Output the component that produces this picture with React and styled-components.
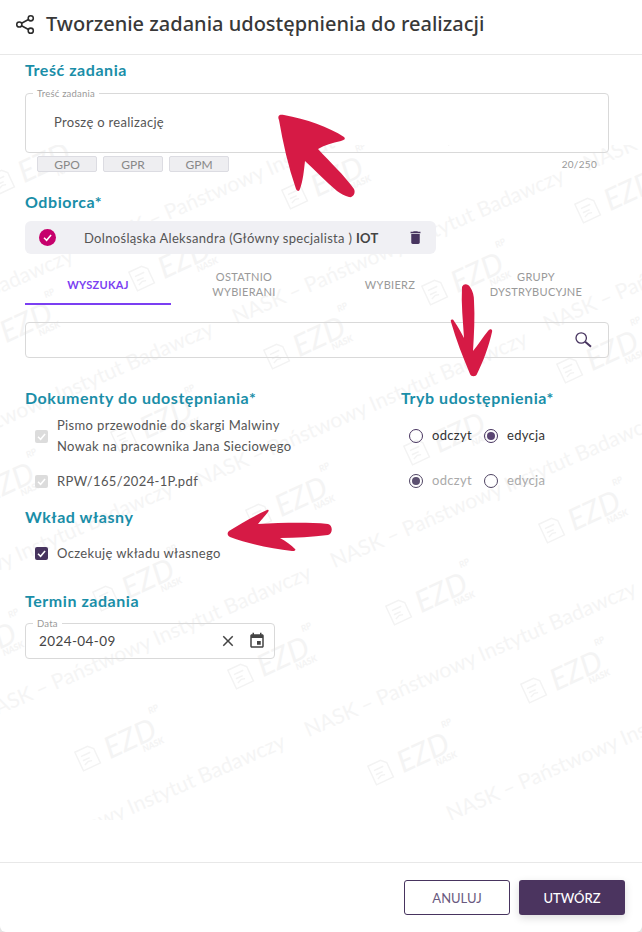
import React from "react";
import styled, { createGlobalStyle } from "styled-components";

const GlobalStyle = createGlobalStyle`
  html, body {
    margin: 0;
    padding: 0;
    background: #e4e4e4;
  }
  * {
    box-sizing: border-box;
  }
`;

const BODY_FONT = `"Lato", "Noto Sans", sans-serif`;

const tabs = [
  { id: "search", label: "Wyszukaj", active: true },
  { id: "recent", label: "Ostatnio wybierani" },
  { id: "pick", label: "Wybierz" },
  { id: "groups", label: "Grupy dystrybucyjne" },
];

// watermark: layer starts at y=145, logos repeat on a lattice
const WATERMARK_TOP = 145;
const logos = [];
for (let row = 0; row < 5; row++) {
  for (let col = -2; col < 3; col++) {
    const x = 89 + col * 293 + row * 18;
    const y = 757 + col * 14 - row * 160;
    [
      [x, y],
      [x + 153, y - 82],
    ].forEach(([lx, ly], i) => {
      if (lx > -60 && lx < 640 && ly > 130 && ly < 830) {
        logos.push({ key: `${row}-${col}-${i}`, x: lx, y: ly - WATERMARK_TOP });
      }
    });
  }
}

// start of each slogan, read off the reference
const slogans = [
  [-46, 889],
  [305, 736],
  [447, 820],
  [-20, 720],
  [331, 567],
  [-158, 636],
  [196, 486],
  [544, 330],
  [-118, 476],
  [233, 323],
  [584, 170],
  [-258, 403],
  [93, 250],
];

function ShareIcon() {
  return (
    <HeaderIcon viewBox="0 0 22 22" fill="none" stroke="#2b2b2b" strokeWidth="1.6">
      <circle cx="16.5" cy="4.5" r="2.7" />
      <circle cx="4.5" cy="11" r="2.7" />
      <circle cx="16.5" cy="17.5" r="2.7" />
      <path d="M6.9 9.7 14.1 5.8M6.9 12.3l7.2 3.9" />
    </HeaderIcon>
  );
}

function Tick({ color = "#fff" }) {
  return (
    <svg width="11" height="11" viewBox="0 0 12 12" fill="none" stroke={color} strokeWidth="1.7">
      <path d="M2.2 6.3 5 9l4.9-5.8" />
    </svg>
  );
}

function LogoMark() {
  return (
    <svg width="25" height="28" viewBox="0 0 26 30" fill="none" stroke="#f3f3f3" strokeWidth="1.6">
      <path d="M3 5h15l5 5v17H3zM7 12h11M7 17h8M7 22l5-2 4 1" />
    </svg>
  );
}

function Watermark() {
  return (
    <WatermarkLayer>
      {logos.map((logo) => (
        <WatermarkLogo key={logo.key} style={{ left: logo.x - 14, top: logo.y - 16 }}>
          <LogoMark />
          <LogoName>
            EZD<sup>RP</sup>
            <small>NASK</small>
          </LogoName>
        </WatermarkLogo>
      ))}
      {slogans.map(([x, y]) => (
        <WatermarkText key={`${x}-${y}`} style={{ left: x, top: y - WATERMARK_TOP - 18 }}>
          NASK – Państwowy Instytut Badawczy
        </WatermarkText>
      ))}
    </WatermarkLayer>
  );
}

function Arrows() {
  return (
    <ArrowLayer viewBox="0 0 642 932" fill="#d61a45">
      <path d="M279 120c-2-5 1-6 5-5 22 4 45 12 60 22 2 2 0 3-3 4-9 2-16 4-23 8 12 13 26 26 36 40 2 4-1 9-5 8-4-1-8-3-12-6-11-9-22-21-32-30-1 9-2 20-5 28-1 3-3 2-4 0-8-23-13-46-17-69z" />
      <path d="M462 287c2-4 6-3 8 0 3 4 4 9 4 14 1 16 0 33-1 50 5-6 10-14 15-20 2-3 5-2 4 1-3 14-9 30-15 42-1 3-6 3-7 0-7-17-14-34-19-52-1-3 2-3 3-1 4 6 7 11 10 17-1-17-3-34-2-51z" />
      <path d="M229 531c11-7 25-15 38-21 2-1 2 1 1 2-3 4-7 8-10 12 23-1 47-2 70 0 5 1 5 10 0 11-16 2-32 3-48 3 6 3 11 7 15 11 1 1 0 2-3 2-20-2-43-7-62-14-3-2-3-4-1-6z" />
    </ArrowLayer>
  );
}

export default function App() {
  return (
    <>
      <GlobalStyle />
      <Dialog>
        <Watermark />
        <Header>
          <ShareIcon />
          <Title>Tworzenie zadania udostępnienia do realizacji</Title>
        </Header>
        <Content>
          <Heading $top={5}>Treść zadania</Heading>
          <OutlinedField $height={60} $top={13}>
            <Legend>Treść zadania</Legend>
            <TaskText>Proszę o realizację</TaskText>
          </OutlinedField>
          <ChipRow>
            <Chips>
              <Chip>GPO</Chip>
              <Chip>GPR</Chip>
              <Chip>GPM</Chip>
            </Chips>
            <Counter>20/250</Counter>
          </ChipRow>

          <Heading $top={20}>Odbiorca*</Heading>
          <RecipientRow>
            <RecipientMain>
              <RecipientBadge>
                <Tick />
              </RecipientBadge>
              <span>
                Dolnośląska Aleksandra (Główny specjalista ) <b>IOT</b>
              </span>
            </RecipientMain>
            <TrashIcon viewBox="0 0 24 24">
              <path d="M6 19c0 1.1.9 2 2 2h8c1.1 0 2-.9 2-2V7H6v12zM19 4h-3.5l-1-1h-5l-1 1H5v2h14V4z" />
            </TrashIcon>
          </RecipientRow>

          <TabBar>
            {tabs.map((tab) => (
              <Tab key={tab.id} $active={tab.active}>
                <TabLabel $active={tab.active}>{tab.label}</TabLabel>
              </Tab>
            ))}
          </TabBar>

          <SearchBox>
            <svg width="19" height="18" viewBox="0 0 19 18" fill="none" stroke="#47345f">
              <circle cx="7.2" cy="7" r="5.2" strokeWidth="1.3" />
              <path d="M11.2 10.8 17 15.8" strokeWidth="2" />
            </svg>
          </SearchBox>

          <ShareGrid>
            <Heading>Dokumenty do udostępniania*</Heading>
            <Heading>Tryb udostępnienia*</Heading>

            <DocRow $height={42} $top={7}>
              <CheckBox $disabled>
                <Tick />
              </CheckBox>
              <DocName>
                Pismo przewodnie do skargi Malwiny
                <br />
                Nowak na pracownika Jana Sieciowego
              </DocName>
            </DocRow>
            <ModeRow $height={42} $top={7}>
              <RadioOption>
                <Radio />
                <RadioLabel>odczyt</RadioLabel>
              </RadioOption>
              <RadioOption>
                <Radio $checked />
                <RadioLabel>edycja</RadioLabel>
              </RadioOption>
            </ModeRow>

            <DocRow $height={20} $top={14}>
              <CheckBox $disabled>
                <Tick />
              </CheckBox>
              <DocName>RPW/165/2024-1P.pdf</DocName>
            </DocRow>
            <ModeRow $height={20} $top={14}>
              <RadioOption>
                <Radio $checked $muted />
                <RadioLabel $muted>odczyt</RadioLabel>
              </RadioOption>
              <RadioOption>
                <Radio $muted />
                <RadioLabel $muted>edycja</RadioLabel>
              </RadioOption>
            </ModeRow>
          </ShareGrid>

          <Heading $top={16}>Wkład własny</Heading>
          <DocRow $height={20} $top={16}>
            <CheckBox>
              <Tick />
            </CheckBox>
            <DocName>Oczekuję wkładu własnego</DocName>
          </DocRow>

          <Heading $top={28}>Termin zadania</Heading>
          <DateField>
            <Legend>Data</Legend>
            <DateValue>2024-04-09</DateValue>
            <DateActions>
              <FieldIcon viewBox="0 0 24 24">
                <path d="M19 6.41 17.59 5 12 10.59 6.41 5 5 6.41 10.59 12 5 17.59 6.41 19 12 13.41 17.59 19 19 17.59 13.41 12z" />
              </FieldIcon>
              <FieldIcon viewBox="0 0 24 24">
                <path d="M17 12h-5v5h5v-5zM16 1v2H8V1H6v2H5c-1.11 0-1.99.9-1.99 2L3 19c0 1.1.89 2 2 2h14c1.1 0 2-.9 2-2V5c0-1.1-.9-2-2-2h-1V1h-2zm3 18H5V8h14v11z" />
              </FieldIcon>
            </DateActions>
          </DateField>
        </Content>
        <Footer>
          <CancelButton>Anuluj</CancelButton>
          <CreateButton>Utwórz</CreateButton>
        </Footer>
        <Arrows />
      </Dialog>
    </>
  );
}

const Dialog = styled.div`
  position: relative;
  display: flex;
  flex-direction: column;
  width: 642px;
  height: 932px;
  overflow: hidden;
  background: #fff;
  border-radius: 0 0 6px 6px;
  font-family: ${BODY_FONT};
  color: #444;
`;

const WatermarkLayer = styled.div`
  position: absolute;
  left: 0;
  right: 0;
  top: ${WATERMARK_TOP}px;
  height: 675px;
  overflow: hidden;
  pointer-events: none;
`;

const WatermarkLogo = styled.div`
  position: absolute;
  display: flex;
  align-items: center;
  gap: 7px;
  transform: rotate(-25deg);
  transform-origin: 14px 16px;
`;

const LogoName = styled.div`
  position: relative;
  font: italic 400 30px/30px "Lato", sans-serif;
  color: #f4f4f4;

  sup {
    position: absolute;
    top: -5px;
    left: 55px;
    font-size: 9px;
    font-weight: 700;
    line-height: 10px;
  }

  small {
    position: absolute;
    top: 27px;
    left: 34px;
    font: italic 900 9px/10px "Lato", sans-serif;
  }
`;

const WatermarkText = styled.div`
  position: absolute;
  white-space: nowrap;
  font: 400 21px/24px "Lato", sans-serif;
  color: #f5f5f5;
  transform: rotate(-23.5deg);
  transform-origin: left center;
`;

const ArrowLayer = styled.svg`
  position: absolute;
  left: 0;
  top: 0;
  width: 642px;
  height: 932px;
  pointer-events: none;
`;

const Header = styled.header`
  position: relative;
  display: flex;
  align-items: center;
  gap: 10px;
  height: 55px;
  padding: 0 0 6px 15px;
  border-bottom: 1px solid #e8e8e8;
`;

const HeaderIcon = styled.svg`
  width: 21px;
  height: 21px;
`;

const Title = styled.h1`
  margin: 0;
  font: 500 20px/28px "Noto Sans", sans-serif;
  color: #383838;
`;

const Content = styled.main`
  position: relative;
  flex: 1;
  padding: 0 33px 0 25px;
`;

const Heading = styled.h2`
  margin: ${(p) => p.$top || 0}px 0 0;
  font: 700 16px/20px ${BODY_FONT};
  letter-spacing: 0.55px;
  color: #1a8ea8;
`;

const OutlinedField = styled.div`
  position: relative;
  height: ${(p) => p.$height}px;
  margin-top: ${(p) => p.$top}px;
  border: 1px solid #d9d9d9;
  border-radius: 4px;
`;

const Legend = styled.span`
  position: absolute;
  left: 7px;
  top: -6px;
  padding: 0 4px;
  background: #fff;
  font-size: 9.5px;
  line-height: 11px;
  letter-spacing: 0.2px;
  color: #999;
`;

const TaskText = styled.div`
  padding: 18px 0 0 28px;
  font-size: 13px;
  line-height: 20px;
  letter-spacing: 0.3px;
  color: #555;
`;

const ChipRow = styled.div`
  display: flex;
  justify-content: space-between;
  align-items: center;
  height: 16px;
  margin-top: 3px;
  padding: 0 12px;
`;

const Chips = styled.div`
  display: flex;
  gap: 6px;
`;

const Chip = styled.div`
  display: flex;
  align-items: center;
  justify-content: center;
  width: 60px;
  height: 16px;
  background: #eeeef1;
  border: 1px solid #dcdce2;
  border-radius: 2px;
  font-size: 12px;
  color: #888;
`;

const Counter = styled.span`
  font-size: 10px;
  letter-spacing: 0.3px;
  color: #999;
`;

const RecipientRow = styled.div`
  display: flex;
  align-items: center;
  justify-content: space-between;
  width: 411px;
  height: 33px;
  margin-top: 9px;
  padding: 0 12px 0 14px;
  background: #f0f0f4;
  border-radius: 6px;
  font-size: 13px;
  letter-spacing: 0.32px;
  color: #555;

  b {
    font-weight: 700;
    color: #444;
  }
`;

const RecipientMain = styled.div`
  display: flex;
  align-items: center;
  gap: 28px;
`;

const RecipientBadge = styled.span`
  display: flex;
  align-items: center;
  justify-content: center;
  width: 17px;
  height: 17px;
  border-radius: 50%;
  background: #c6006c;
`;

const TrashIcon = styled.svg`
  width: 17px;
  height: 17px;
  fill: #47345f;
`;

const TabBar = styled.nav`
  display: grid;
  grid-template-columns: repeat(4, 146px);
  height: 43px;
  margin-top: 8px;
`;

const Tab = styled.div`
  display: flex;
  align-items: center;
  justify-content: center;
  padding: 0 32px 0;
  border-bottom: 2px solid ${(p) => (p.$active ? "#7b3ff2" : "transparent")};
  text-align: center;
`;

const TabLabel = styled.span`
  margin-top: 3px;
  font-size: 11px;
  line-height: 15px;
  font-weight: ${(p) => (p.$active ? 700 : 400)};
  letter-spacing: 0.3px;
  text-transform: uppercase;
  color: ${(p) => (p.$active ? "#7b3ff2" : "#999")};
`;

const SearchBox = styled.div`
  display: flex;
  align-items: center;
  justify-content: flex-end;
  height: 36px;
  margin-top: 17px;
  padding-right: 15px;
  border: 1px solid #d9d9d9;
  border-radius: 4px;
`;

const ShareGrid = styled.section`
  display: grid;
  grid-template-columns: 376px 1fr;
  margin-top: 30px;
`;

const DocRow = styled.div`
  display: flex;
  align-items: center;
  gap: 9px;
  height: ${(p) => p.$height}px;
  margin-top: ${(p) => p.$top}px;
  padding-left: 10px;
`;

const CheckBox = styled.span`
  display: flex;
  align-items: center;
  justify-content: center;
  flex-shrink: 0;
  width: 13px;
  height: 13px;
  border-radius: 2px;
  background: ${(p) => (p.$disabled ? "#dcdcdc" : "#47345f")};
`;

const DocName = styled.span`
  font-size: 13px;
  line-height: 21px;
  letter-spacing: 0.35px;
  color: #555;
  white-space: nowrap;
`;

const ModeRow = styled.div`
  display: flex;
  align-items: center;
  height: ${(p) => p.$height}px;
  margin-top: ${(p) => p.$top}px;
  padding-left: 8px;
`;

const RadioOption = styled.label`
  display: flex;
  align-items: center;
  gap: 9px;
  width: 75px;
`;

const Radio = styled.span`
  position: relative;
  width: 14px;
  height: 14px;
  border-radius: 50%;
  border: 1.5px solid ${(p) => (p.$muted ? "#4f4463" : "#47345f")};

  &::after {
    content: "";
    display: ${(p) => (p.$checked ? "block" : "none")};
    position: absolute;
    inset: 2px;
    border-radius: 50%;
    background: ${(p) => (p.$muted ? "#5c5070" : "#5a4472")};
  }
`;

const RadioLabel = styled.span`
  margin-top: -2px;
  font-size: 13px;
  line-height: 16px;
  letter-spacing: 0.3px;
  color: ${(p) => (p.$muted ? "#aaa" : "#333")};
`;

const DateField = styled.div`
  position: relative;
  display: flex;
  align-items: center;
  justify-content: space-between;
  width: 250px;
  height: 36px;
  margin-top: 12px;
  padding: 0 8px 0 13px;
  border: 1px solid #d9d9d9;
  border-radius: 4px;
`;

const DateValue = styled.span`
  font-size: 13.5px;
  letter-spacing: 0.4px;
  color: #444;
`;

const DateActions = styled.div`
  display: flex;
  gap: 11px;
`;

const FieldIcon = styled.svg`
  width: 18px;
  height: 18px;
  fill: #444;
`;

const Footer = styled.footer`
  position: relative;
  display: flex;
  justify-content: flex-end;
  gap: 9px;
  height: 70px;
  padding: 17px 17px 0 0;
  border-top: 1px solid #e8e8e8;
`;

const CancelButton = styled.button`
  width: 106px;
  height: 35px;
  background: #fff;
  border: 1px solid #47345f;
  border-radius: 3px;
  font: 400 13px ${BODY_FONT};
  text-transform: uppercase;
  color: #6a5a80;
`;

const CreateButton = styled.button`
  width: 106px;
  height: 35px;
  background: #4b345f;
  border: none;
  border-radius: 3px;
  box-shadow: 0 3px 8px rgba(0, 0, 0, 0.14);
  font: 500 13px ${BODY_FONT};
  text-transform: uppercase;
  color: #fff;
`;
